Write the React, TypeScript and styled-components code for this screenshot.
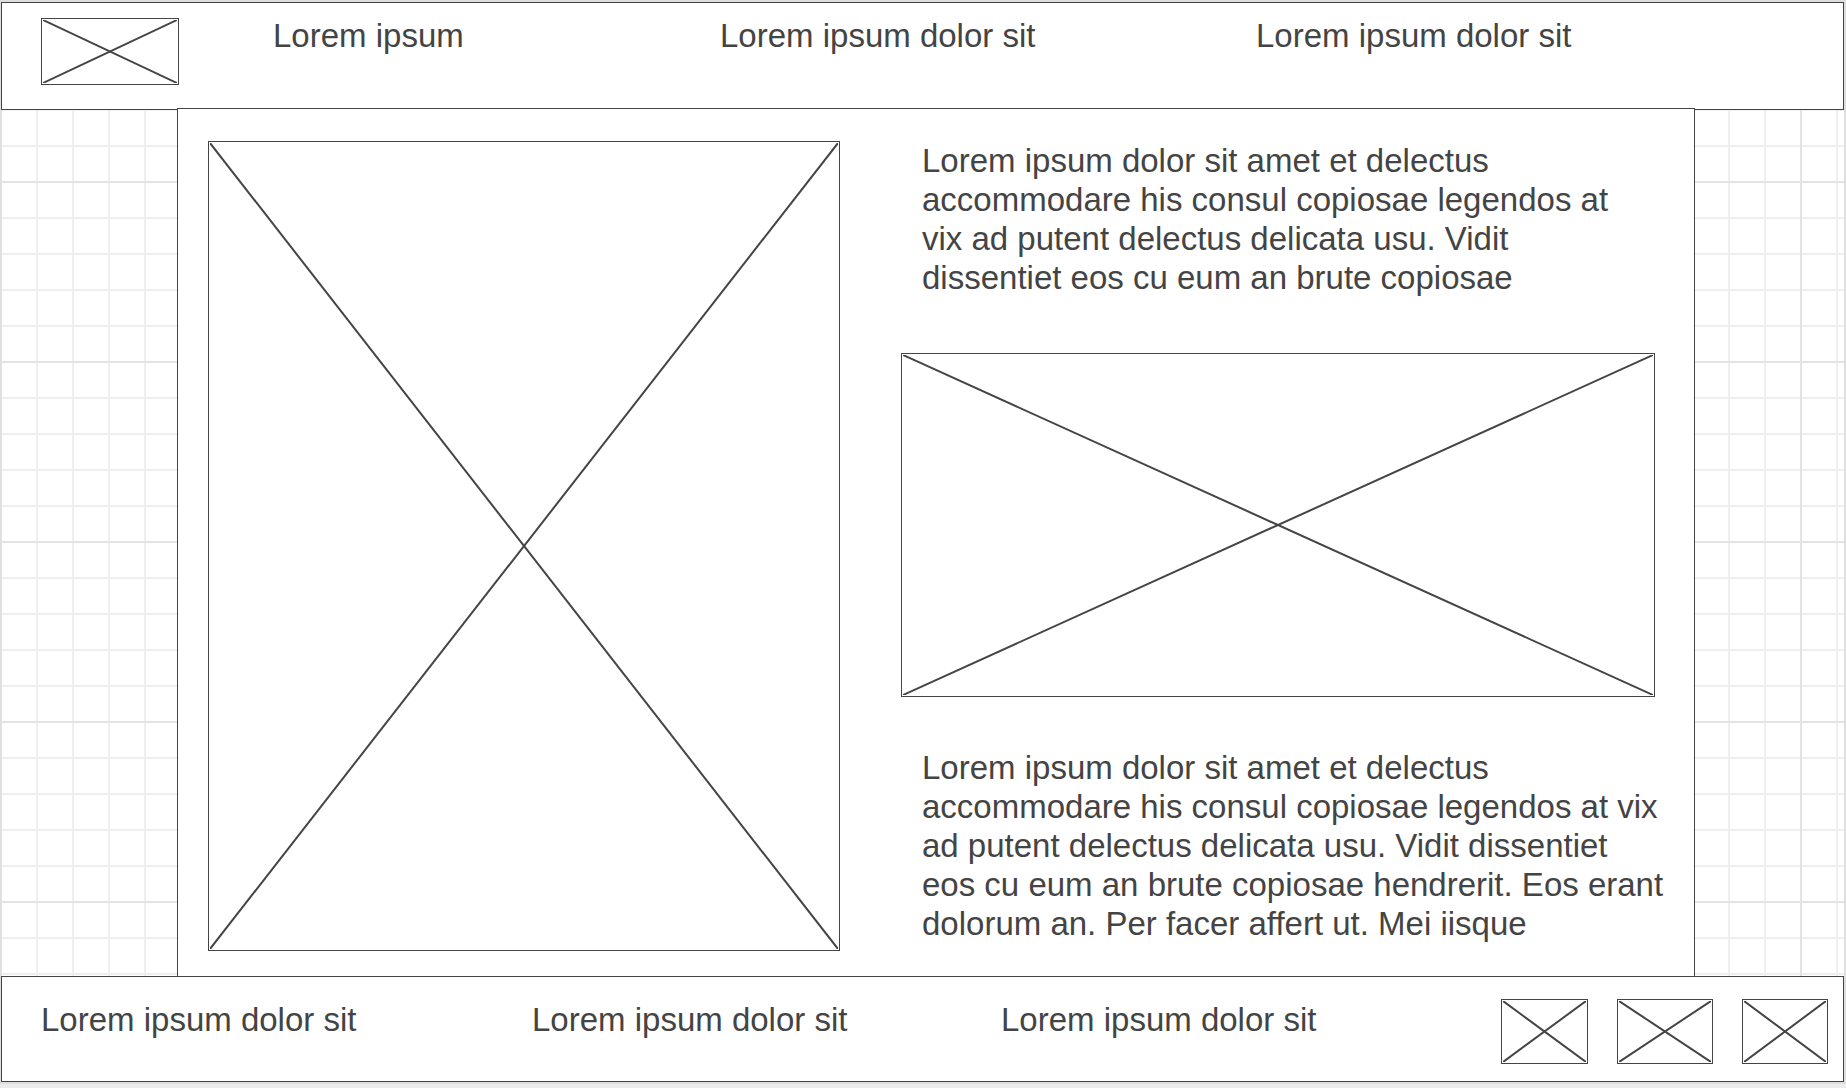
import React from "react";
import styled, { createGlobalStyle } from "styled-components";

const ink = "#444444";
const edge = "#dedede";

const GlobalStyle = createGlobalStyle`
  *, *::before, *::after {
    box-sizing: border-box;
  }
  body {
    margin: 0;
    background: #ebebeb;
    color: ${ink};
    font-family: "Liberation Sans", Arial, sans-serif;
    font-size: 33px;
    line-height: 39px;
  }
`;

const Sheet = styled.div`
  border: solid ${edge};
  border-width: 2px 2px 2px 1px;
  background-color: #ffffff;
  background-image:
    linear-gradient(to right, #e3e3e3 2px, transparent 2px),
    linear-gradient(to bottom, #e3e3e3 2px, transparent 2px),
    linear-gradient(to right, #efefef 2px, transparent 2px),
    linear-gradient(to bottom, #efefef 2px, transparent 2px);
  background-size: 180px 180px, 180px 180px, 36px 36px, 36px 36px;
  background-position: -1px -1px;
`;

const Header = styled.header`
  display: flex;
  align-items: flex-start;
  padding: 13px 0 24px 39px;
  border: 1px solid ${ink};
  background: #ffffff;
`;

const Logo = styled.div`
  padding-top: 2px;
`;

const HeaderNav = styled.nav`
  flex: 1;
  display: grid;
  grid-template-columns: 447fr 536fr 587fr;
  margin-left: 94px;
`;

const TextLink = styled.a`
  color: inherit;
  text-decoration: none;
  white-space: nowrap;
`;

const Main = styled.main`
  display: grid;
  grid-template-columns: 632fr 768fr;
  column-gap: 61px;
  margin: -2px 149px 0 176px;
  padding: 32px 25px 25px 30px;
  border: solid ${ink};
  border-width: 1px 1px 0;
  background: #ffffff;
`;

const Article = styled.div`
  padding-bottom: 8px;
`;

const Paragraph = styled.p<{ $inset: number }>`
  margin: 0;
  padding: 0 ${(p) => p.$inset}px 0 21px;
`;

const Figure = styled.div`
  margin: 56px 14px 51px 0;
`;

const Frame = styled.div<{ $width?: string; $height?: string; $ratio?: string }>`
  width: ${(p) => p.$width ?? "100%"};
  height: ${(p) => p.$height ?? "auto"};
  aspect-ratio: ${(p) => p.$ratio ?? "auto"};
  padding: 1px;
  border: 1px solid ${ink};
  background: #ffffff;
`;

const Cross = styled.svg`
  display: block;
  width: 100%;
  height: 100%;
  stroke: ${ink};
  stroke-width: 2;
`;

const Footer = styled.footer`
  display: flex;
  align-items: flex-start;
  padding: 22px 15px 17px 39px;
  border: 1px solid ${ink};
  background: #ffffff;
`;

const FooterNav = styled.nav`
  flex: 1;
  display: grid;
  grid-template-columns: 491fr 469fr 500fr;
  padding-top: 1px;
`;

const Badges = styled.div`
  display: flex;
  gap: 29px;
`;

type PlaceholderProps = { label: string; width?: string; height?: string; ratio?: string };

function Placeholder({ label, width, height, ratio }: PlaceholderProps) {
  return (
    <Frame role="img" aria-label={label} $width={width} $height={height} $ratio={ratio}>
      <Cross aria-hidden="true">
        <line x1="0" y1="0" x2="100%" y2="100%" />
        <line x1="100%" y1="0" x2="0" y2="100%" />
      </Cross>
    </Frame>
  );
}

const headerLinks = ["Lorem ipsum", "Lorem ipsum dolor sit", "Lorem ipsum dolor sit"];
const footerLinks = ["Lorem ipsum dolor sit", "Lorem ipsum dolor sit", "Lorem ipsum dolor sit"];
const badgeWidths = ["87px", "96px", "86px"];

export default function App() {
  return (
    <>
      <GlobalStyle />
      <Sheet>
        <Header>
          <Logo>
            <Placeholder label="Logo" width="138px" height="67px" />
          </Logo>
          <HeaderNav aria-label="Primary">
            {headerLinks.map((text, i) => (
              <TextLink href="#" key={i}>{text}</TextLink>
            ))}
          </HeaderNav>
        </Header>
        <Main>
          <Placeholder label="Tall image" />
          <Article>
            <Paragraph $inset={40}>
              Lorem ipsum dolor sit amet et delectus accommodare his consul copiosae legendos at
              vix ad putent delectus delicata usu. Vidit dissentiet eos cu eum an brute copiosae
            </Paragraph>
            <Figure>
              <Placeholder label="Wide image" ratio="754 / 344" />
            </Figure>
            <Paragraph $inset={3}>
              Lorem ipsum dolor sit amet et delectus accommodare his consul copiosae legendos at
              vix ad putent delectus delicata usu. Vidit dissentiet eos cu eum an brute copiosae
              hendrerit. Eos erant dolorum an. Per facer affert ut. Mei iisque
            </Paragraph>
          </Article>
        </Main>
        <Footer>
          <FooterNav aria-label="Secondary">
            {footerLinks.map((text, i) => (
              <TextLink href="#" key={i}>{text}</TextLink>
            ))}
          </FooterNav>
          <Badges>
            {badgeWidths.map((width, i) => (
              <Placeholder key={i} label={`Badge ${i + 1}`} width={width} height="65px" />
            ))}
          </Badges>
        </Footer>
      </Sheet>
    </>
  );
}
